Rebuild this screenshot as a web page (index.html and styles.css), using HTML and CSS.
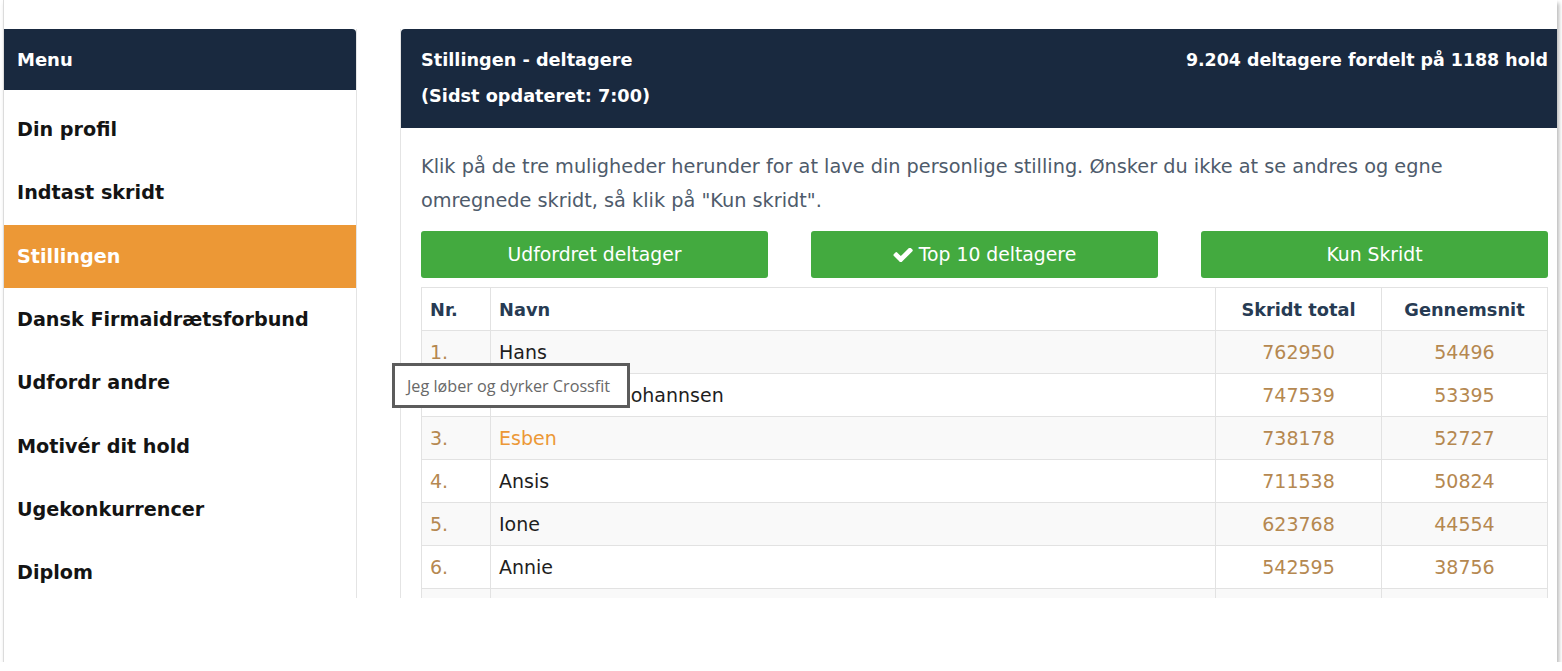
FILE: index.html
```html
<!DOCTYPE html>
<html lang="da">
<head>
<meta charset="utf-8">
<title>Stillingen - deltagere</title>
<link rel="stylesheet" href="styles.css">
</head>
<body>
<div class="frame">
  <div class="viewport">
    <aside class="sidebar">
      <div class="side-head">Menu</div>
      <ul class="menu">
        <li>Din profil</li>
        <li>Indtast skridt</li>
        <li class="active">Stillingen</li>
        <li>Dansk Firmaidrætsforbund</li>
        <li>Udfordr andre</li>
        <li>Motivér dit hold</li>
        <li>Ugekonkurrencer</li>
        <li>Diplom</li>
      </ul>
    </aside>
    <main class="panel">
      <div class="panel-head">
        <div class="head-left">
          <div>Stillingen - deltagere</div>
          <div>(Sidst opdateret: 7:00)</div>
        </div>
        <div class="head-right">9.204 deltagere fordelt på 1188 hold</div>
      </div>
      <div class="panel-body">
        <p class="intro">Klik på de tre muligheder herunder for at lave din personlige stilling. Ønsker du ikke at se andres og egne omregnede skridt, så klik på "Kun skridt".</p>
        <div class="btns">
          <button class="btn">Udfordret deltager</button>
          <button class="btn"><svg class="check" viewBox="90 420 1600 1020" width="20" height="14"><path d="M1671 566q0 40-28 68l-724 724-136 136q-28 28-68 28t-68-28l-136-136-362-362q-28-28-28-68t28-68l136-136q28-28 68-28t68 28l294 295 656-657q28-28 68-28t68 28l136 136q28 28 28 68z" fill="#fff"/></svg>Top 10 deltagere</button>
          <button class="btn">Kun Skridt</button>
        </div>
        <table class="standings">
          <colgroup>
            <col class="c-nr"><col class="c-name"><col class="c-num"><col class="c-num">
          </colgroup>
          <thead>
            <tr><th class="nr">Nr.</th><th class="name">Navn</th><th class="num">Skridt total</th><th class="num">Gennemsnit</th></tr>
          </thead>
          <tbody>
            <tr><td class="nr">1.</td><td class="name">Hans</td><td class="num">762950</td><td class="num">54496</td></tr>
            <tr><td class="nr">2.</td><td class="name">Mattias Kjær Johannsen</td><td class="num">747539</td><td class="num">53395</td></tr>
            <tr><td class="nr">3.</td><td class="name me">Esben</td><td class="num">738178</td><td class="num">52727</td></tr>
            <tr><td class="nr">4.</td><td class="name">Ansis</td><td class="num">711538</td><td class="num">50824</td></tr>
            <tr><td class="nr">5.</td><td class="name">Ione</td><td class="num">623768</td><td class="num">44554</td></tr>
            <tr><td class="nr">6.</td><td class="name">Annie</td><td class="num">542595</td><td class="num">38756</td></tr>
            <tr class="cut"><td class="nr"></td><td class="name"></td><td class="num"></td><td class="num"></td></tr>
          </tbody>
        </table>
      </div>
    </main>
  </div>
  <div class="tooltip">Jeg løber og dyrker Crossfit</div>
</div>
</body>
</html>
```

FILE: styles.css
```css
* { box-sizing: border-box; }
html, body { margin: 0; padding: 0; background: #fff; }
body { font-family: "DejaVu Sans", sans-serif; color: #222; }

.frame {
  position: relative;
  margin-left: 3px;
  width: 1554px;
  height: 662px;
  background: #fff;
  border-left: 1px solid #dcdcdc;
  box-shadow: 2px 3px 4px rgba(0,0,0,0.28);
}
.viewport {
  display: flex;
  height: 598px;
  overflow: hidden;
  padding-top: 29px;
}

.sidebar {
  width: 353px;
  flex: none;
  border-right: 1px solid #e4e4e4;
}
.side-head {
  height: 61px;
  background: #19293f;
  color: #fff;
  font-weight: 700;
  font-size: 18px;
  display: flex;
  align-items: center;
  padding-left: 13px;
  border-top-right-radius: 4px;
}
.menu {
  list-style: none;
  margin: 0;
  padding: 8px 0 0;
}
.menu li {
  height: 63.33px;
  display: flex;
  align-items: center;
  padding-left: 13px;
  font-weight: 700;
  font-size: 19.2px;
  color: #141414;
}
.menu li.active { background: #ec9836; color: #fff; }

.panel {
  flex: 1;
  margin-left: 43px;
  border-left: 1px solid #e4e4e4;
}
.panel-head {
  background: #19293f;
  color: #fff;
  font-weight: 700;
  font-size: 17.7px;
  line-height: 36px;
  height: 99px;
  padding: 13px 10px 0 20px;
  display: flex;
  justify-content: space-between;
  border-top-left-radius: 4px;
}
.head-right { font-size: 17.4px; }
.panel-body { padding: 22px 10px 0 20px; }
.intro {
  margin: 0 0 13px;
  font-size: 19.3px;
  line-height: 34px;
  color: #4e5b6b;
}
.btns {
  display: grid;
  grid-template-columns: repeat(3, 1fr);
  column-gap: 43px;
  margin-bottom: 9px;
}
.btn {
  height: 47px;
  border: none;
  border-radius: 3px;
  background: #43aa3f;
  color: #fff;
  font-family: "DejaVu Sans", sans-serif;
  font-size: 18.8px;
  display: flex;
  align-items: center;
  justify-content: center;
  gap: 6px;
}
.check { display: block; }

.standings {
  width: 1126px;
  border-collapse: collapse;
  table-layout: fixed;
  border: 1px solid #e2e2e2;
}
.c-nr { width: 69px; }
.c-name { width: 725px; }
.c-num { width: 166px; }
.standings th, .standings td {
  height: 43px;
  border: 1px solid #e2e2e2;
  padding: 0 8px;
  font-size: 19px;
}
.standings th {
  font-weight: 700;
  font-size: 17.8px;
  color: #273b53;
  text-align: left;
}
.standings th.num, .standings td.num { text-align: center; }
.standings tbody tr:nth-child(odd) { background: #f9f9f9; }
.standings td.nr, .standings td.num { color: #b58850; }
.standings td.name { color: #1e1e1e; }
.standings td.name.me { color: #ec9836; }

.tooltip {
  position: absolute;
  left: 388px;
  top: 363px;
  width: 238px;
  height: 45px;
  background: #fff;
  border: 3px solid #5c5c5c;
  font-family: "Open Sans", sans-serif;
  font-size: 16.2px;
  color: #686868;
  padding-left: 12px;
  display: flex;
  align-items: center;
}
```
